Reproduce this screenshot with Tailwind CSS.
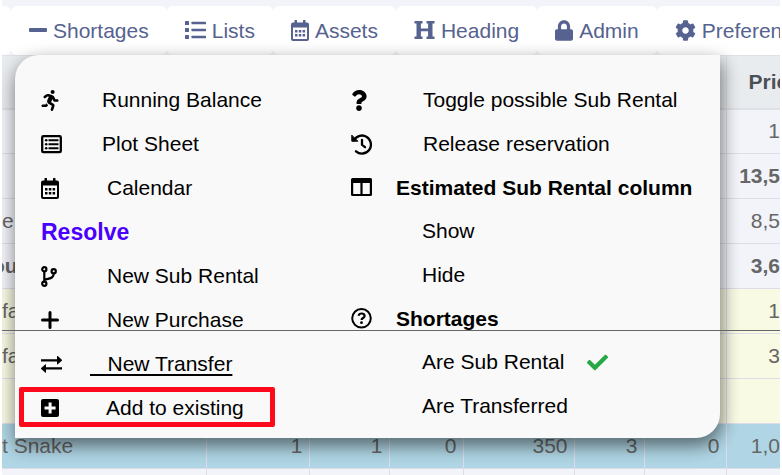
<!doctype html>
<html lang="en">
    <head>
        <meta charset="UTF-8">
        <meta name="viewport" content="width=device-width, initial-scale=1">

        <title>Shortages</title>

        <!-- TAILWIND -->
        <script src="https://cdn.jsdelivr.net/npm/@tailwindcss/browser@4"></script>
    </head>
    <body class="bg-white font-['Liberation_Sans',Arial,sans-serif] text-[21px] leading-6">

        <!-- PAGE -->
        <div class="relative mx-0.5 min-h-screen overflow-hidden bg-[#f3f4fa]">

            <!-- TABS -->
            <nav class="flex pt-1.5 text-[#56628f] whitespace-nowrap">

                <div class="w-[9px] shrink-0 bg-white rounded-r-md"></div>

                <a href="#" class="flex shrink-0 items-center gap-1.5 h-[49px] px-[18px] bg-white rounded-md">
                    <svg class="w-[18px] h-[21px]" viewBox="0 0 18 21" fill="currentColor"><rect y="8" width="18" height="4" rx="1"/></svg>
                    Shortages
                </a>

                <a href="#" class="flex shrink-0 items-center gap-1.5 h-[49px] px-[18px] bg-white rounded-md">
                    <svg class="w-[21px] h-[21px]" viewBox="0 0 21 21" fill="currentColor">
                        <rect y="1" width="4" height="4" rx=".6"/><rect y="8" width="4" height="4" rx=".6"/><rect y="15" width="4" height="4" rx=".6"/>
                        <rect x="6.500" y="1.700" width="14.500" height="2.600" rx=".6"/><rect x="6.500" y="8.700" width="14.500" height="2.600" rx=".6"/><rect x="6.500" y="15.700" width="14.500" height="2.600" rx=".6"/>
                    </svg>
                    Lists
                </a>

                <a href="#" class="flex shrink-0 items-center gap-1.5 h-[49px] px-[18px] bg-white rounded-md">
                    <svg class="w-[18px] h-[21px]" viewBox="0 0 18 21" fill="currentColor">
                        <path fill-rule="evenodd" d="M4 0h1.500q.5 0 .5.500V2.500h6V.5q0-.5.5-.5H14q.5 0 .5.500V2.500H16q2 0 2 2V19q0 2-2 2H2q-2 0-2-2V4.500q0-2 2-2h1.500V.5Q3.500 0 4 0zM2 7.500V18.500q0 .5.500.5h13q.5 0 .5-.5V7.500z"/>
                        <path d="M4 10h2.500v2.500H4zM7.800 10h2.500v2.500H7.800zM11.600 10h2.500v2.500h-2.500zM4 14h2.500v2.500H4zM7.800 14h2.500v2.500H7.800zM11.600 14h2.500v2.500h-2.500z"/>
                    </svg>
                    Assets
                </a>

                <a href="#" class="flex shrink-0 items-center gap-1.5 h-[49px] px-[18px] bg-white rounded-md">
                    <svg class="w-[21px] h-[21px]" viewBox="0 0 21 21" fill="currentColor"><path d="M.5 1h8v2.600H6.900V8.500h7.200V3.600h-1.600V1h8v2.600h-2v12.800h2V19h-8v-2.600h1.600v-5.100H6.900v5.100h1.600V19h-8v-2.600h2V3.600h-2z"/></svg>
                    Heading
                </a>

                <a href="#" class="flex shrink-0 items-center gap-1.5 h-[49px] px-[18px] bg-white rounded-md">
                    <svg class="w-[18px] h-[21px]" viewBox="0 0 448 512" fill="currentColor"><path d="M400 224h-24v-72C376 68.200 307.800 0 224 0S72 68.200 72 152v72H48c-26.500 0-48 21.500-48 48v192c0 26.500 21.500 48 48 48h352c26.500 0 48-21.500 48-48V272c0-26.500-21.500-48-48-48zm-104 0H152v-72c0-39.700 32.300-72 72-72s72 32.300 72 72v72z"/></svg>
                    Admin
                </a>

                <a href="#" class="flex shrink-0 items-center gap-1.5 h-[49px] px-[18px] bg-white rounded-md">
                    <svg class="w-[21px] h-[21px]" viewBox="0 0 512 512" fill="currentColor"><path d="M487.400 315.700l-42.600-24.600c4.300-23.200 4.300-47 0-70.200l42.600-24.600c4.900-2.800 7.100-8.600 5.500-14-11.100-35.600-30-67.800-54.700-94.600-3.800-4.100-10-5.100-14.800-2.300L380.800 110c-17.900-15.400-38.500-27.300-60.800-35.100V25.800c0-5.600-3.900-10.500-9.400-11.700-36.700-8.200-74.300-7.800-109.200 0-5.500 1.200-9.400 6.100-9.400 11.700V75c-22.200 7.900-42.800 19.800-60.800 35.100L88.700 85.500c-4.900-2.800-11-1.900-14.800 2.300-24.700 26.700-43.600 58.900-54.700 94.600-1.700 5.400.6 11.200 5.500 14L67.300 221c-4.300 23.200-4.300 47 0 70.200l-42.600 24.600c-4.900 2.800-7.100 8.600-5.500 14 11.100 35.600 30 67.800 54.700 94.600 3.800 4.100 10 5.100 14.800 2.300l42.600-24.600c17.900 15.400 38.500 27.300 60.800 35.100v49.200c0 5.600 3.900 10.500 9.400 11.700 36.700 8.200 74.300 7.800 109.200 0 5.500-1.200 9.400-6.100 9.400-11.700v-49.200c22.200-7.900 42.800-19.800 60.800-35.100l42.600 24.600c4.900 2.800 11 1.900 14.800-2.300 24.700-26.700 43.600-58.900 54.700-94.600 1.500-5.500-.7-11.300-5.600-14.100zM256 336c-44.100 0-80-35.900-80-80s35.900-80 80-80 80 35.900 80 80-35.900 80-80 80z"/></svg>
                    Preferences
                </a>
            </nav>

            <!-- TABLE -->
            <table class="w-full table-fixed border-collapse text-right whitespace-nowrap text-[#666]">
                <colgroup>
                    <col>
                    <col class="w-[103px]">
                    <col class="w-20">
                    <col class="w-[74px]">
                    <col class="w-[111px]">
                    <col class="w-[70px]">
                    <col class="w-[82px]">
                    <col class="w-[54px]">
                </colgroup>
                <thead>
                    <tr class="h-[53px] bg-[#e9ecef] border-t border-b-2 border-[#dee2e6] text-[#495057]">
                        <th class="border-r border-[#dee2e6]"></th>
                        <th class="border-r border-[#dee2e6]"></th>
                        <th class="border-r border-[#dee2e6]"></th>
                        <th class="border-r border-[#dee2e6]"></th>
                        <th class="border-r border-[#dee2e6]"></th>
                        <th class="border-r border-[#dee2e6]"></th>
                        <th class="border-r border-[#dee2e6]"></th>
                        <th class="pl-[22px] overflow-hidden text-left">Price</th>
                    </tr>
                </thead>
                <tbody>
                    <tr class="h-[45px] border-b border-[#dcdde8]">
                        <td colspan="7" class="border-r border-[#dcdde8]"></td>
                        <td>1</td>
                    </tr>
                    <tr class="h-[45px] border-b border-[#dcdde8] font-bold">
                        <td colspan="7" class="border-r border-[#dcdde8]"></td>
                        <td>13,5</td>
                    </tr>
                    <tr class="h-[45px] border-b border-[#dcdde8]">
                        <td colspan="7" class="border-r border-[#dcdde8] text-left">e</td>
                        <td>8,5</td>
                    </tr>
                    <tr class="h-[45px] border-b border-[#dcdde8] font-bold">
                        <td colspan="7" class="border-r border-[#dcdde8] text-left"><span class="-ml-2.5">ou</span></td>
                        <td>3,6</td>
                    </tr>
                    <tr class="h-[45px] bg-[#f8fae3] border-b border-[#dcdde8]">
                        <td colspan="7" class="border-r border-[#dcdde8] text-left">fa</td>
                        <td>1</td>
                    </tr>
                    <tr class="h-[45px] bg-[#f8fae3] border-b border-[#dcdde8]">
                        <td colspan="7" class="border-r border-[#dcdde8] text-left">fa</td>
                        <td>3</td>
                    </tr>
                    <tr class="h-[45px] bg-[#f8fae3] border-b border-[#dcdde8]">
                        <td colspan="7" class="border-r border-[#dcdde8]"></td>
                        <td></td>
                    </tr>
                    <tr class="h-[45px] bg-[#b0d6e5] border-b border-[#dcdde8]">
                        <td class="border-r border-[#dcdde8] text-left">t Snake</td>
                        <td class="border-r border-[#dcdde8] pr-1.5">1</td>
                        <td class="border-r border-[#dcdde8] pr-1.5">1</td>
                        <td class="border-r border-[#dcdde8] pr-1.5">0</td>
                        <td class="border-r border-[#dcdde8] pr-1.5">350</td>
                        <td class="border-r border-[#dcdde8] pr-1.5">3</td>
                        <td class="border-r border-[#dcdde8] pr-1.5">0</td>
                        <td>1,0</td>
                    </tr>
                    <tr class="h-2">
                        <td class="border-r border-[#dcdde8]"></td>
                        <td class="border-r border-[#dcdde8]"></td>
                        <td class="border-r border-[#dcdde8]"></td>
                        <td class="border-r border-[#dcdde8]"></td>
                        <td class="border-r border-[#dcdde8]"></td>
                        <td class="border-r border-[#dcdde8]"></td>
                        <td class="border-r border-[#dcdde8]"></td>
                        <td></td>
                    </tr>
                </tbody>
            </table>

            <!-- MENU -->
            <div class="absolute top-[55px] left-[13px] grid w-[705px] grid-cols-[310px_1fr] pt-[23px] pr-5 pb-2 pl-[26px] bg-[#f9f9f9] rounded-tl-3xl rounded-br-3xl text-black whitespace-nowrap shadow-[2px_8px_16px_rgba(0,0,0,0.3),0_6px_20px_rgba(0,0,0,0.3)]">

                <!-- REPORTS AND RESOLVE -->
                <ul>
                    <li>
                        <a href="#" class="flex h-11 items-center">
                            <span class="w-[61px]">
                                <svg class="w-[18px] h-[21px]" viewBox="0 0 416 512" fill="currentColor"><path d="M272 96c26.510 0 48-21.490 48-48S298.510 0 272 0s-48 21.490-48 48 21.490 48 48 48zM113.690 317.470l-14.800 34.520H32c-17.670 0-32 14.330-32 32s14.330 32 32 32h77.450c19.250 0 36.580-11.440 44.110-29.090l8.790-20.520-10.670-6.300c-17.320-10.230-30.060-25.370-37.990-42.610zM384 223.990h-44.030l-26.060-53.250c-12.500-25.550-35.450-44.230-61.780-50.940l-71.080-21.140c-28.300-6.800-57.770-.55-80.840 17.140l-39.670 30.410c-14.030 10.750-16.690 30.830-5.940 44.860s30.840 16.690 44.860 5.940l39.660-30.410c7.670-5.890 17.440-8 25.270-6.140l14.700 4.370-37.460 87.390c-12.620 29.480-1.310 64.010 26.300 80.310l84.980 50.170-27.470 87.730c-5.280 16.860 4.110 34.820 20.970 40.090 3.190 1 6.410 1.480 9.580 1.480 13.610 0 26.230-8.770 30.520-22.450l31.640-101.060c5.910-20.770-2.890-43.080-21.640-54.390l-61.240-36.140 31.310-78.280 20.270 41.430c8 16.340 24.920 26.890 43.110 26.890H384c17.670 0 32-14.330 32-32s-14.330-31.990-32-31.990z"/></svg>
                            </span>
                            Running Balance
                        </a>
                    </li>
                    <li>
                        <a href="#" class="flex h-11 items-center">
                            <span class="w-[61px]">
                                <svg class="w-[21px] h-[21px]" viewBox="0 0 21 21" fill="currentColor">
                                    <rect x="1.200" y="2.200" width="18.600" height="16" rx="1.200" fill="none" stroke="currentColor" stroke-width="2.300"/>
                                    <circle cx="5.200" cy="6.200" r="1.300"/><circle cx="5.200" cy="10.200" r="1.300"/><circle cx="5.200" cy="14.200" r="1.300"/>
                                    <path d="M7.500 5.200h10v2h-10zM7.500 9.200h10v2h-10zM7.500 13.200h10v2h-10z"/>
                                </svg>
                            </span>
                            Plot Sheet
                        </a>
                    </li>
                    <li>
                        <a href="#" class="flex h-11 items-center">
                            <span class="w-[66px]">
                                <svg class="w-[18px] h-[21px]" viewBox="0 0 18 21" fill="currentColor">
                                    <path fill-rule="evenodd" d="M4 0h1.500q.5 0 .5.500V2.500h6V.5q0-.5.5-.5H14q.5 0 .5.500V2.500H16q2 0 2 2V19q0 2-2 2H2q-2 0-2-2V4.500q0-2 2-2h1.500V.5Q3.500 0 4 0zM2 7.500V18.500q0 .5.500.5h13q.5 0 .5-.5V7.500z"/>
                                    <path d="M4 10h2.500v2.500H4zM7.800 10h2.500v2.500H7.800zM11.600 10h2.500v2.500h-2.500zM4 14h2.500v2.500H4zM7.800 14h2.500v2.500H7.800zM11.600 14h2.500v2.500h-2.500z"/>
                                </svg>
                            </span>
                            Calendar
                        </a>
                    </li>
                    <li>
                        <h3 class="flex h-11 items-center text-[23px] font-bold text-[#4a00ff]">Resolve</h3>
                    </li>
                    <li>
                        <a href="#" class="flex h-11 items-center">
                            <span class="w-[66px]">
                                <svg class="w-4 h-[21px]" viewBox="0 0 16 21" fill="none" stroke="currentColor" stroke-width="2.200">
                                    <circle cx="3.300" cy="3.300" r="2.100"/><circle cx="12.700" cy="5.300" r="2.100"/><circle cx="3.300" cy="17.700" r="2.100"/>
                                    <path d="M3.300 5.500v10M12.700 7.500c0 5-4 4.500-9.400 6.500"/>
                                </svg>
                            </span>
                            New Sub Rental
                        </a>
                    </li>
                    <li>
                        <a href="#" class="flex h-11 items-center">
                            <span class="w-[66px]">
                                <svg class="w-[18px] h-[21px]" viewBox="0 0 18 21" fill="none" stroke="currentColor" stroke-width="3" stroke-linecap="round"><path d="M9 2.500v15M1.500 10h15"/></svg>
                            </span>
                            New Purchase
                        </a>
                    </li>
                    <li>
                        <a href="#" class="flex h-11 items-center">
                            <span class="w-[49px]">
                                <svg class="w-[21px] h-[21px]" viewBox="0 0 21 21" fill="currentColor"><path d="M0 5.200h16V2.500q0-1 .8-.4l4 3.600q.5.500 0 1l-4 3.600q-.8.600-.8-.4V7.500H0zM21 13.300H5v-2.500q0-1-.8-.4l-4 3.600q-.5.500 0 1l4 3.600q.8.600.8-.4v-2.600h16z"/></svg>
                            </span>
                            <span class="underline decoration-2 underline-offset-3">&nbsp;&nbsp;&nbsp;New Transfer</span>
                        </a>
                    </li>
                    <li class="relative">
                        <a href="#" class="flex h-11 items-center">
                            <span class="w-[65px]">
                                <svg class="w-[18px] h-[21px]" viewBox="0 0 18 21" fill="currentColor"><path fill-rule="evenodd" d="M2 1h14q2 0 2 2v14q0 2-2 2H2q-2 0-2-2V3q0-2 2-2zM7.600 4.500v4H3.500v3h4.100v4h3v-4h4v-3h-4v-4z"/></svg>
                            </span>
                            Add to existing
                        </a>
                        <span class="absolute top-px -left-[22px] h-10 w-64 border-5 border-[#ff0a1c] rounded-xs pointer-events-none"></span>
                    </li>
                </ul>

                <!-- SUB RENTAL AND SHORTAGES -->
                <ul>
                    <li>
                        <a href="#" class="flex h-11 items-center">
                            <span class="w-[72px]">
                                <svg class="w-4 h-[21px]" viewBox="0 0 384 512" fill="currentColor"><path d="M202.021 0C122.202 0 70.503 32.703 29.914 91.026c-7.363 10.580-5.093 25.086 5.178 32.874l43.138 32.709c10.373 7.865 25.132 6.026 33.253-4.148 25.049-31.381 43.630-49.449 82.757-49.449 30.764 0 68.816 19.799 68.816 49.631 0 22.552-18.617 34.134-48.993 51.164-35.423 19.860-82.299 44.576-82.299 106.405V320c0 13.255 10.745 24 24 24h72.471c13.255 0 24-10.745 24-24v-5.773c0-42.860 125.268-44.645 125.268-160.627C377.504 66.256 286.902 0 202.021 0zM192 373.459c-38.196 0-69.271 31.075-69.271 69.271 0 38.195 31.075 69.270 69.271 69.270s69.271-31.075 69.271-69.271-31.075-69.270-69.271-69.270z"/></svg>
                            </span>
                            Toggle possible Sub Rental
                        </a>
                    </li>
                    <li>
                        <a href="#" class="flex h-11 items-center">
                            <span class="w-[72px]">
                                <svg class="w-[21px] h-[21px]" viewBox="0 0 21 21" fill="none" stroke="currentColor" stroke-width="2.300" stroke-linecap="round">
                                    <path d="M3 6.300A9 9 0 1 1 5 17.300M11 5.800v5l3 2.400"/>
                                    <path d="M.8 1.500v5.700h5.700z" fill="currentColor" stroke-width="1" stroke-linejoin="round"/>
                                </svg>
                            </span>
                            Release reservation
                        </a>
                    </li>
                    <li>
                        <h3 class="flex h-[43px] items-center font-bold">
                            <span class="w-[45px]">
                                <svg class="w-[21px] h-[21px]" viewBox="0 0 21 21" fill="currentColor"><path fill-rule="evenodd" d="M1.500 1h18q1.500 0 1.500 1.500v15q0 1.500-1.500 1.500h-18Q0 19 0 17.500v-15Q0 1 1.500 1zM2.200 6v11h7.200V6zM11.600 6v11h7.200V6z"/></svg>
                            </span>
                            Estimated Sub Rental column
                        </h3>
                    </li>
                    <li>
                        <a href="#" class="flex h-11 items-center pl-[71px]">Show</a>
                    </li>
                    <li>
                        <a href="#" class="flex h-11 items-center pl-[71px]">Hide</a>
                    </li>
                    <li>
                        <h3 class="flex h-[43px] items-center font-bold">
                            <span class="w-[45px]">
                                <svg class="w-[21px] h-[21px]" viewBox="0 0 21 21" fill="none" stroke="currentColor" stroke-width="2">
                                    <circle cx="10.500" cy="10.300" r="9.300"/>
                                    <path d="M7.500 7.800C8 6 9.200 5.500 10.600 5.500c1.700 0 3 .9 3 2.400 0 2.200-3 2-3 4.100" stroke-width="2.200"/>
                                    <circle cx="10.500" cy="14.700" r="1.400" fill="currentColor" stroke="none"/>
                                </svg>
                            </span>
                            Shortages
                        </h3>
                    </li>
                    <li>
                        <a href="#" class="flex h-11 items-center gap-[23px] pl-[71px]">
                            Are Sub Rental
                            <svg class="w-[21px] h-[21px] text-[#28a745]" viewBox="0 0 512 512" fill="currentColor"><path d="M173.898 439.404l-166.400-166.400c-9.997-9.997-9.997-26.206 0-36.204l36.203-36.204c9.997-9.998 26.207-9.998 36.204 0L192 312.690 432.095 72.596c9.997-9.997 26.207-9.997 36.204 0l36.203 36.204c9.997 9.997 9.997 26.206 0 36.204l-294.400 294.401c-9.998 9.997-26.207 9.997-36.204-.001z"/></svg>
                        </a>
                    </li>
                    <li>
                        <a href="#" class="flex h-11 items-center pl-[71px]">Are Transferred</a>
                    </li>
                </ul>
            </div>

            <!-- RULE -->
            <div class="absolute inset-x-0 top-[330px] h-px bg-[#666]"></div>
        </div>
    </body>
</html>
